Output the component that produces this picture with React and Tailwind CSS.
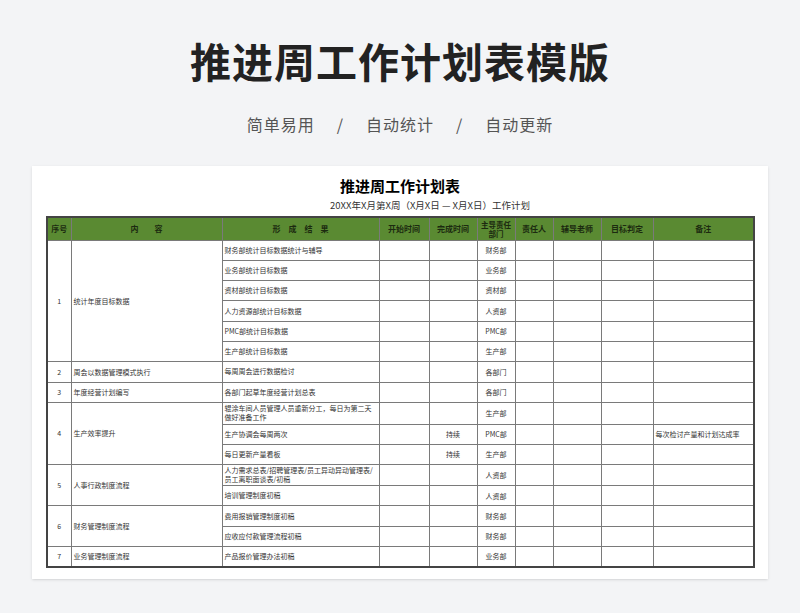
const cols=[24,151,157,50,48,38,38,48,52,101];
const H=20.3;
const rows=[
 {n:"1",c:"统计年度目标数据",span:6,sub:[["财务部统计目标数据统计与辅导","财务部"],["业务部统计目标数据","业务部"],["资材部统计目标数据","资材部"],["人力资源部统计目标数据","人资部"],["PMC部统计目标数据","PMC部"],["生产部统计目标数据","生产部"]]},
 {n:"2",c:"周会以数据管理模式执行",span:1,sub:[["每周周会进行数据检讨","各部门"]]},
 {n:"3",c:"年度经营计划编写",span:1,sub:[["各部门起草年度经营计划总表","各部门"]]},
 {n:"4",c:"生产效率提升",span:3,sub:[["辊涂车间人员管理人员重新分工，每日为第二天做好准备工作","生产部","",22],["生产协调会每周两次","PMC部","持续",20,"每次检讨产量和计划达成率"],["每日更新产量看板","生产部","持续"]]},
 {n:"5",c:"人事行政制度流程",span:2,sub:[["人力需求总表/招聘管理表/员工异动异动管理表/员工离职面谈表/初稿","人资部","",21],["培训管理制度初稿","人资部"]]},
 {n:"6",c:"财务管理制度流程",span:2,sub:[["费用报销管理制度初稿","财务部"],["应收应付款管理流程初稿","财务部"]]},
 {n:"7",c:"业务管理制度流程",span:1,sub:[["产品报价管理办法初稿","业务部"]]},
];
const td="border border-[#7a7a7a] px-[2px] align-middle";
export default function App(){
 return(<div className="w-[800px] h-[613px] bg-[#f3f4f6] overflow-hidden" style={{fontFamily:'"Noto Sans CJK SC",sans-serif'}}>
  <div className="pt-[38px] flex justify-center"><h1 className="text-[41px] font-bold text-[#222] tracking-[1px] leading-[44px]">推进周工作计划表模版</h1></div>
  <div className="mt-[31px] flex justify-center text-[16px] leading-[22px] text-[#555] tracking-[1px]"><span>简单易用</span><span className="mx-[22px]">/</span><span>自动统计</span><span className="mx-[22px]">/</span><span>自动更新</span></div>
  <div className="mx-[32px] mt-[31px] bg-white h-[413px] overflow-hidden shadow-sm">
   <div className="text-center text-[15px] font-bold text-black pt-[10px] leading-[20px]">推进周工作计划表</div>
   <div className="text-center text-[9.5px] text-[#333] leading-[14px] mt-[2px] mb-[4px] ml-[60px]">20XX年X月第X周（X月X日 — X月X日）工作计划</div>
   <table className="ml-[14px] border-collapse border-2 border-[#444] text-[7px] text-[#333] table-fixed" style={{width:707}}>
    <colgroup>{cols.map((w,i)=><col key={i} style={{width:w}}/>)}</colgroup>
    <thead><tr className="bg-[#5a8a32] text-[#1c2a10] font-bold text-[8px] h-[23px]">
     <th className={td}>序号</th><th className={td}>内　　容</th><th className={td}>形　成　结　果</th><th className={td}>开始时间</th><th className={td}>完成时间</th><th className={td+" leading-[9px] text-[7.5px]"}>主导责任部门</th><th className={td}>责任人</th><th className={td}>辅导老师</th><th className={td}>目标判定</th><th className={td}>备注</th>
    </tr></thead>
    <tbody>{rows.map(r=>r.sub.map((s,j)=>(<tr key={r.n+j} style={{height:s[3]||H}}>
      {j===0&&<><td rowSpan={r.span} className={td+" text-center"}>{r.n}</td><td rowSpan={r.span} className={td}>{r.c}</td></>}
      <td className={td+" leading-[9px]"}>{s[0]}</td><td className={td}></td><td className={td+" text-center"}>{s[2]||""}</td><td className={td+" text-center"}>{s[1]}</td><td className={td}></td><td className={td}></td><td className={td}></td><td className={td+" whitespace-nowrap overflow-hidden"}>{s[4]||""}</td>
     </tr>)))}</tbody>
   </table>
  </div>
 </div>);
}
